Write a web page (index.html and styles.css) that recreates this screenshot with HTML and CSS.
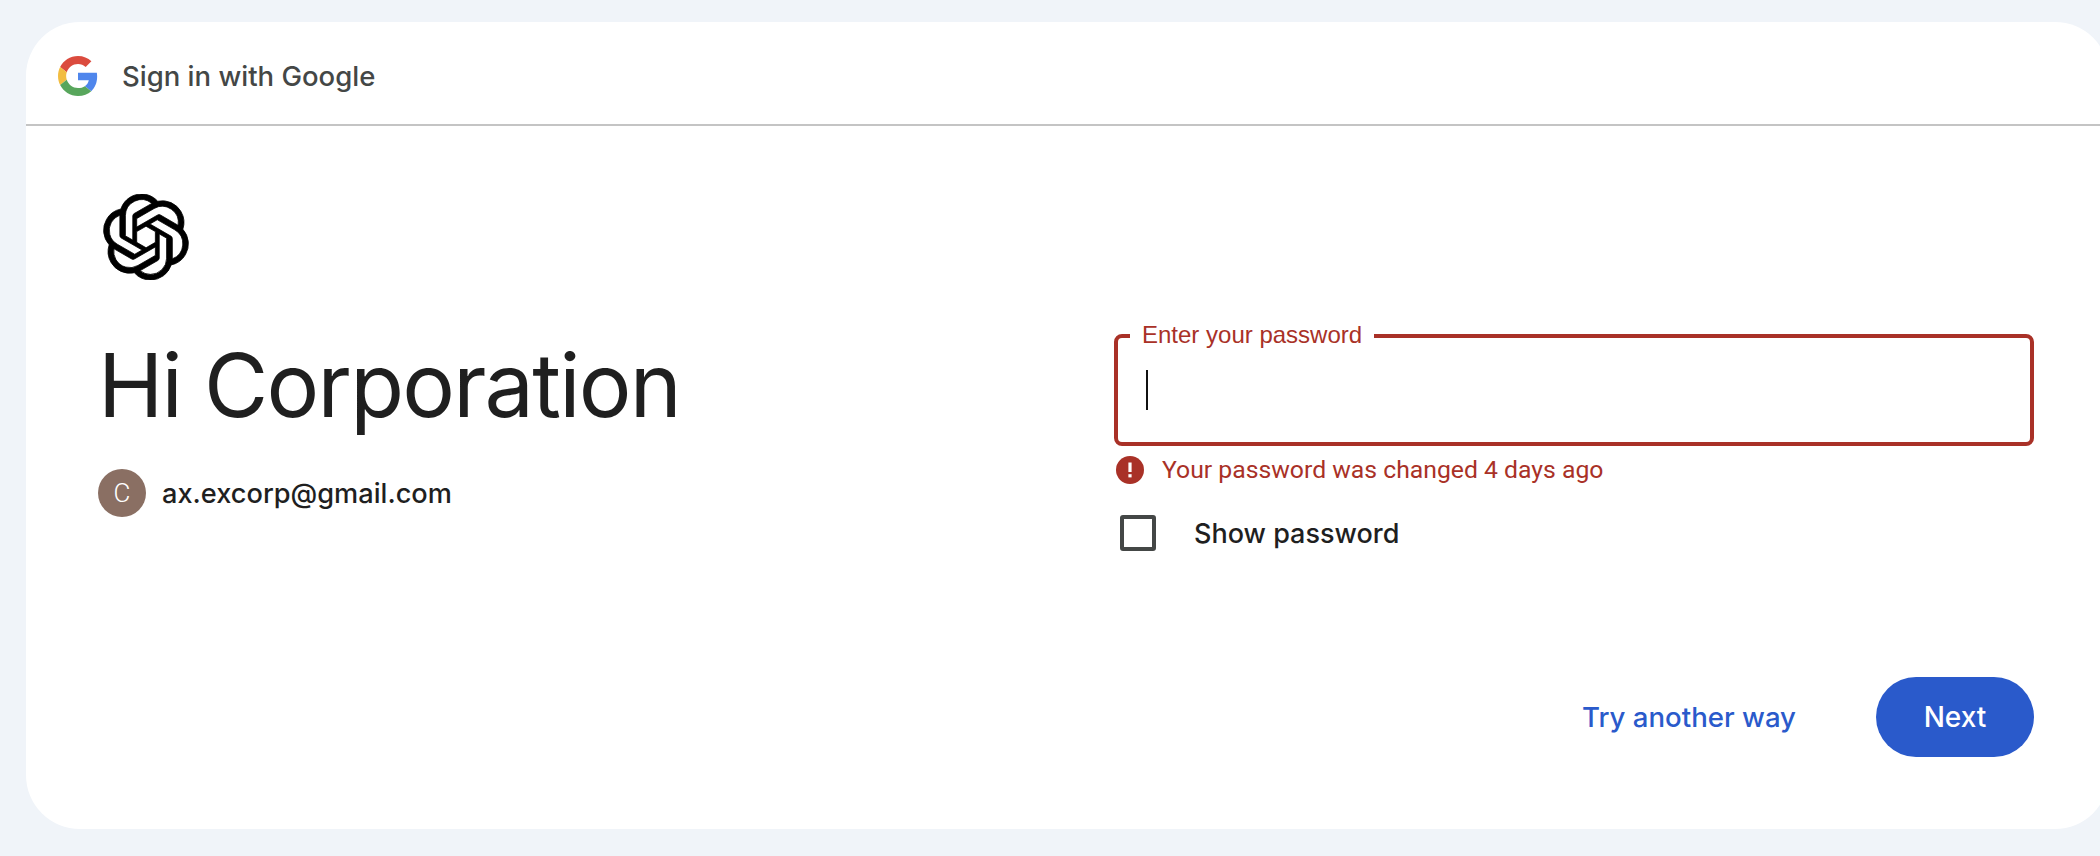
FILE: index.html
```html
<!DOCTYPE html>
<html lang="en">
<head>
    <meta charset="UTF-8">
    <meta name="viewport" content="width=device-width, initial-scale=1.0">
    <title>Sign in with Google</title>
    <link rel="stylesheet" href="styles.css">
</head>
<body>
    <div class="card">
        <div class="card-header">
            <svg class="google-icon" viewBox="0 0 48 48">
                <path fill="#db4b3e" d="M24 9.5c3.54 0 6.71 1.22 9.21 3.6l6.85-6.85C35.9 2.38 30.47 0 24 0 14.62 0 6.51 5.38 2.56 13.22l7.98 6.19C12.43 13.72 17.74 9.5 24 9.5z"/>
                <path fill="#4f86ec" d="M46.98 24.55c0-1.57-.15-3.09-.38-4.55H24v9.02h12.94c-.58 2.96-2.26 5.48-4.78 7.18l7.73 6c4.51-4.18 7.09-10.36 7.09-17.65z"/>
                <path fill="#f2bd42" d="M10.53 28.59c-.48-1.45-.76-2.99-.76-4.59s.27-3.14.76-4.59l-7.98-6.19C.92 16.46 0 20.12 0 24c0 3.88.92 7.54 2.56 10.78l7.97-6.19z"/>
                <path fill="#58a65c" d="M24 48c6.48 0 11.93-2.13 15.89-5.81l-7.73-6c-2.15 1.45-4.92 2.3-8.16 2.3-6.26 0-11.57-4.22-13.47-9.91l-7.98 6.19C6.51 42.62 14.62 48 24 48z"/>
            </svg>
            <span class="header-title">Sign in with Google</span>
        </div>
        <div class="card-body">
            <div class="left-col">
                <svg class="logo" viewBox="0 0 24 24">
                    <path fill="#000" stroke="#000" stroke-width="0.22" d="M22.2819 9.8211a5.9847 5.9847 0 0 0-.5157-4.9108 6.0462 6.0462 0 0 0-6.5098-2.9A6.0651 6.0651 0 0 0 4.9807 4.1818a5.9847 5.9847 0 0 0-3.9977 2.9 6.0462 6.0462 0 0 0 .7427 7.0966 5.98 5.98 0 0 0 .511 4.9107 6.051 6.051 0 0 0 6.5146 2.9001A5.9847 5.9847 0 0 0 13.2599 24a6.0557 6.0557 0 0 0 5.7718-4.2058 5.9894 5.9894 0 0 0 3.9977-2.9001 6.0557 6.0557 0 0 0-.7475-7.0729zm-9.022 12.6081a4.4755 4.4755 0 0 1-2.8764-1.0408l.1419-.0804 4.7783-2.7582a.7948.7948 0 0 0 .3927-.6813v-6.7369l2.02 1.1686a.071.071 0 0 1 .038.052v5.5826a4.504 4.504 0 0 1-4.4945 4.4944zm-9.6607-4.1254a4.4708 4.4708 0 0 1-.5346-3.0137l.142.0852 4.783 2.7582a.7712.7712 0 0 0 .7806 0l5.8428-3.3685v2.3324a.0804.0804 0 0 1-.0332.0615L9.74 19.9502a4.4992 4.4992 0 0 1-6.1408-1.6464zM2.3408 7.8956a4.485 4.485 0 0 1 2.3655-1.9728V11.6a.7664.7664 0 0 0 .3879.6765l5.8144 3.3543-2.0201 1.1685a.0757.0757 0 0 1-.071 0l-4.8303-2.7865A4.504 4.504 0 0 1 2.3408 7.872zm16.5963 3.8558L13.1038 8.364 15.1192 7.2a.0757.0757 0 0 1 .071 0l4.8303 2.7913a4.4944 4.4944 0 0 1-.6765 8.1042v-5.6772a.79.79 0 0 0-.407-.667zm2.0107-3.0231l-.142-.0852-4.7735-2.7818a.7759.7759 0 0 0-.7854 0L9.409 9.2297V6.8974a.0662.0662 0 0 1 .0284-.0615l4.8303-2.7866a4.4992 4.4992 0 0 1 6.6802 4.66zM8.3065 12.863l-2.02-1.1638a.0804.0804 0 0 1-.038-.0567V6.0742a4.4992 4.4992 0 0 1 7.3757-3.4537l-.142.0805L8.704 5.459a.7948.7948 0 0 0-.3927.6813zm1.0976-2.3654l2.602-1.4998 2.6069 1.4998v2.9994l-2.5974 1.4997-2.6067-1.4997Z"/>
                </svg>
                <h1 class="greeting">Hi Corporation</h1>
                <div class="account">
                    <span class="avatar">C</span>
                    <span class="email">ax.excorp@gmail.com</span>
                </div>
            </div>
            <div class="right-col">
                <fieldset class="password-box">
                    <legend class="password-label">Enter your password</legend>
                    <span class="caret"></span>
                </fieldset>
                <div class="error-row">
                    <svg class="error-icon" viewBox="0 0 28 28">
                        <circle cx="14" cy="14" r="14" fill="#a93127"/>
                        <rect x="12.4" y="6.5" width="3.2" height="9.5" fill="#fff"/>
                        <rect x="12.4" y="18.2" width="3.2" height="3.2" fill="#fff"/>
                    </svg>
                    <span class="error-text">Your password was changed 4 days ago</span>
                </div>
                <label class="show-password">
                    <span class="checkbox"></span>
                    <span>Show password</span>
                </label>
                <div class="actions">
                    <a href="#" class="try-link">Try another way</a>
                    <button class="next-btn">Next</button>
                </div>
            </div>
        </div>
    </div>
</body>
</html>
```

FILE: styles.css
```css
html, body {
    height: 100%;
}

body {
    margin: 0;
    padding: 22px 0 0 26px;
    box-sizing: border-box;
    background-color: #f0f4f9;
    overflow: hidden;
    font-family: Inter, "Liberation Sans", sans-serif;
    color: #1f1f1f;
}

.card {
    width: 2083px;
    height: 807px;
    background-color: #fff;
    border-radius: 54px;
}

.card-header {
    height: 96px;
    padding: 6px 0 0 32px;
    border-bottom: 2px solid #c4c4c4;
    display: flex;
    align-items: center;
}

.google-icon {
    width: 40px;
    height: 40px;
    margin-right: 24px;
}

.header-title {
    font-size: 27.5px;
    font-weight: 500;
    color: #444746;
}

.card-body {
    display: flex;
    padding: 68px 75px 0 76px;
}

.left-col {
    width: 1012px;
}

.logo {
    display: block;
    width: 86px;
    height: 86px;
    margin-left: 1px;
}

.greeting {
    margin: 55px 0 0 -4px;
    font-size: 88px;
    line-height: 100px;
    font-weight: 400;
    letter-spacing: -1.8px;
}

.account {
    display: flex;
    align-items: center;
    margin-top: 34px;
    margin-left: -4px;
}

.avatar {
    width: 48px;
    height: 48px;
    border-radius: 50%;
    background-color: #8a6f63;
    color: #fff;
    font-family: Roboto, sans-serif;
    font-size: 26px;
    font-weight: 300;
    display: flex;
    align-items: center;
    justify-content: center;
    margin-right: 16px;
}

.email {
    font-size: 27.2px;
    font-weight: 500;
}

.right-col {
    flex: 1;
    padding-top: 127px;
}

.password-box {
    margin: 0;
    padding: 0;
    height: 125px;
    box-sizing: border-box;
    border: 4px solid #a93127;
    border-radius: 8px;
}

.password-label {
    margin-left: 12px;
    padding: 0 12px 2px;
    font-family: "Liberation Sans", sans-serif;
    font-size: 24px;
    line-height: 28px;
    color: #a93127;
}

.caret {
    display: block;
    width: 2px;
    height: 40px;
    margin: 19px 0 0 28px;
    background-color: #111;
}

.error-row {
    display: flex;
    align-items: center;
    margin-top: 9px;
    padding-left: 2px;
}

.error-icon {
    width: 28px;
    height: 28px;
    margin-right: 18px;
}

.error-text {
    font-family: Roboto, sans-serif;
    font-size: 24.75px;
    color: #a93127;
}

.show-password {
    display: flex;
    align-items: center;
    margin-top: 31px;
    padding-left: 6px;
    font-size: 27px;
    font-weight: 500;
}

.checkbox {
    width: 28px;
    height: 28px;
    border: 4px solid #444746;
    border-radius: 3px;
    margin-right: 38px;
}

.actions {
    display: flex;
    align-items: center;
    justify-content: flex-end;
    margin-top: 126px;
}

.try-link {
    color: #2a5acb;
    text-decoration: none;
    font-size: 27.6px;
    font-weight: 450;
    margin-right: 80px;
}

.next-btn {
    width: 158px;
    height: 80px;
    border: none;
    border-radius: 40px;
    background-color: #2a5acb;
    color: #fff;
    font-family: Inter, sans-serif;
    font-size: 28px;
    font-weight: 450;
    cursor: pointer;
}
```
